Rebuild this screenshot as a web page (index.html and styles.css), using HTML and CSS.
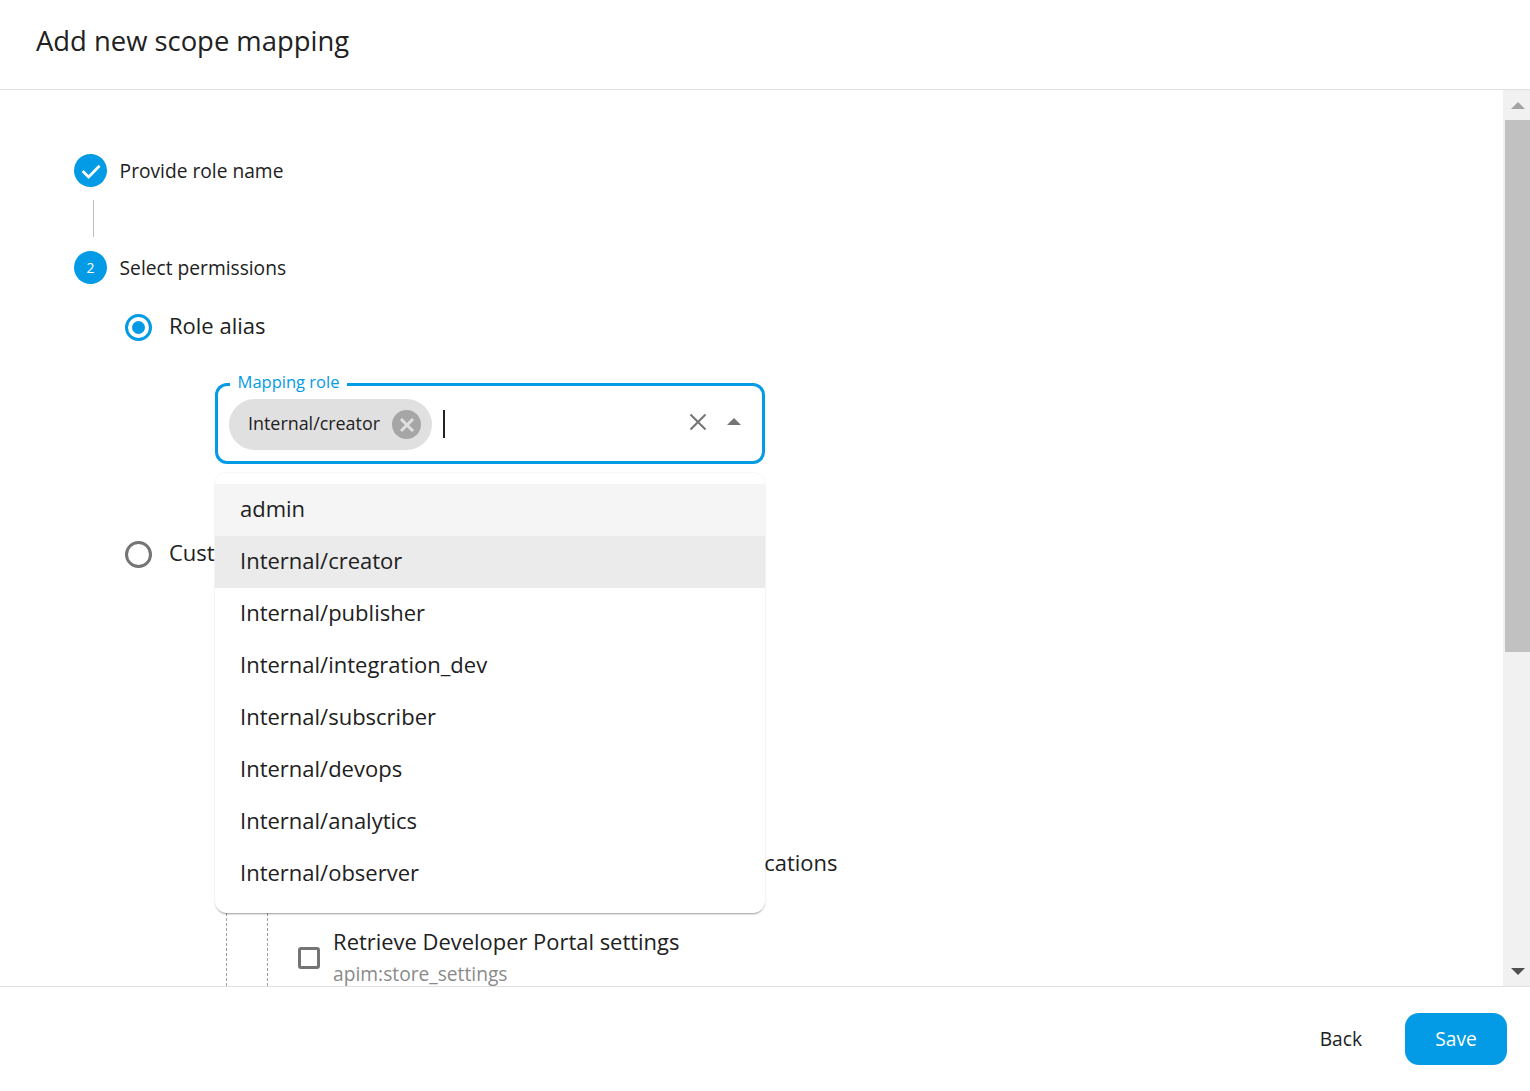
FILE: index.html
```html
<!DOCTYPE html>
<html lang="en">
<head>
<meta charset="utf-8">
<title>Add new scope mapping</title>
<link rel="stylesheet" href="styles.css">
</head>
<body>
<div class="dialog">
  <header class="dialog-header"><h2 class="dialog-title">Add new scope mapping</h2></header>
  <div class="dialog-main">
    <main class="content">
      <div class="step">
        <span class="step-icon">
          <svg width="20" height="20" viewBox="0 0 20 20"><path d="M1.6 10l6 6L18.6 4.8" fill="none" stroke="#fff" stroke-width="2.7"/></svg>
        </span>
        <span class="step-label">Provide role name</span>
      </div>
      <div class="connector"></div>
      <div class="step">
        <span class="step-icon">2</span>
        <span class="step-label">Select permissions</span>
      </div>
      <div class="option first">
        <span class="radio checked"><span class="radio-dot"></span></span>
        <span class="option-label">Role alias</span>
      </div>
      <div class="field">
        <span class="field-label">Mapping role</span>
        <span class="chip">
          <span class="chip-text">Internal/creator</span>
          <span class="chip-del">
            <svg width="16" height="16" viewBox="0 0 16 16"><path d="M2 2l12 12M14 2L2 14" stroke="#e0e0e0" stroke-width="3"/></svg>
          </span>
        </span>
        <span class="caret"></span>
        <svg class="clear-icon" width="18" height="18" viewBox="0 0 18 18"><path d="M1.5 1.5l15 15M16.5 1.5l-15 15" stroke="#757575" stroke-width="2.1"/></svg>
        <span class="arrow-up"></span>
      </div>
      <div class="option second">
        <span class="radio"></span>
        <span class="option-label">Custom scope assignments</span>
      </div>
      <div class="tree">
        <div class="tree-inner">
          <div class="perm">
            <span class="checkbox"></span>
            <div class="perm-text">
              <div class="perm-title">Retrieve, Manage and Import, Export applications</div>
              <div class="perm-sub">apim:app_manage</div>
            </div>
          </div>
          <div class="perm">
            <span class="checkbox"></span>
            <div class="perm-text">
              <div class="perm-title">Retrieve Developer Portal settings</div>
              <div class="perm-sub">apim:store_settings</div>
            </div>
          </div>
        </div>
      </div>
      <ul class="menu">
        <li class="menu-item hover">admin</li>
        <li class="menu-item selected">Internal/creator</li>
        <li class="menu-item">Internal/publisher</li>
        <li class="menu-item">Internal/integration_dev</li>
        <li class="menu-item">Internal/subscriber</li>
        <li class="menu-item">Internal/devops</li>
        <li class="menu-item">Internal/analytics</li>
        <li class="menu-item">Internal/observer</li>
      </ul>
    </main>
    <aside class="scrollbar">
      <span class="sb-btn"><span class="sb-up"></span></span>
      <span class="sb-thumb"></span>
      <span class="sb-track"></span>
      <span class="sb-btn"><span class="sb-down"></span></span>
    </aside>
  </div>
  <footer class="dialog-footer">
    <button class="btn">Back</button>
    <button class="btn primary">Save</button>
  </footer>
</div>
</body>
</html>
```
FILE: styles.css
```css
* { box-sizing: border-box; }
html, body { margin: 0; padding: 0; height: 100%; }
body { font-family: "Open Sans", "Noto Sans", sans-serif; color: #212121; background: #fff; overflow: hidden; }
.dialog { display: flex; flex-direction: column; height: 1091px; }
.dialog-header { height: 90px; border-bottom: 1px solid #e0e0e0; padding: 0 36px 8px; display: flex; align-items: center; flex: none; }
.dialog-title { margin: 0; font-size: 27.4px; font-weight: 400; line-height: 40px; }
.dialog-main { flex: 1; display: flex; min-height: 0; }
.content { flex: 1; position: relative; overflow: hidden; padding: 64px 0 0 74px; }
.step { display: flex; align-items: center; height: 33px; gap: 12.6px; }
.step-icon { width: 33px; height: 33px; border-radius: 50%; background: #039be5; color: #fff; font-size: 14px; display: flex; align-items: center; justify-content: center; flex: none; }
.step-label { font-size: 19.2px; line-height: 33px; }
.connector { width: 1px; height: 37px; background: #bdbdbd; margin: 13px 0 14px 19px; }
.option { display: flex; align-items: center; gap: 17px; height: 27px; margin-left: 51px; }
.option.first { margin-top: 30px; }
.option.second { margin-top: 77px; }
.option-label { font-size: 22px; line-height: 27px; white-space: nowrap; padding-bottom: 4px; }
.radio { width: 27px; height: 27px; border: 3px solid #757575; border-radius: 50%; display: flex; align-items: center; justify-content: center; flex: none; }
.radio.checked { border-color: #039be5; }
.radio-dot { width: 13px; height: 13px; background: #039be5; border-radius: 50%; }
.field { position: relative; display: flex; align-items: center; width: 550px; height: 81px; margin: 42px 0 0 141px; padding-left: 11px; border: 3px solid #039be5; border-radius: 12px; }
.field-label { position: absolute; left: 12px; top: -15px; padding: 0 8px 0 7.6px; background: #fff; color: #039be5; font-size: 16.5px; line-height: 22px; }
.chip { display: flex; align-items: center; width: 203px; height: 51px; margin-top: 2px; border-radius: 26px; background: #e0e0e0; padding: 0 11px 0 19px; justify-content: space-between; }
.chip-text { font-size: 17.9px; padding-bottom: 4px; }
.chip-del { width: 29px; height: 29px; border-radius: 50%; background: #a6a6a6; display: flex; align-items: center; justify-content: center; }
.caret { width: 2px; height: 28px; background: #212121; margin-left: 11px; }
.clear-icon { position: absolute; left: 471px; top: 27px; }
.arrow-up { position: absolute; left: 509px; top: 32px; border: 7px solid transparent; border-top: 0; border-bottom-color: #757575; }
.tree { margin: 270px 0 0 152px; border-left: 1px dashed #9e9e9e; padding-left: 40px; }
.tree-inner { border-left: 1px dashed #9e9e9e; padding-left: 30px; }
.perm { display: flex; align-items: center; gap: 13.5px; height: 79px; }
.perm-text { margin-top: 2px; }
.checkbox { width: 22px; height: 22px; margin-top: 2px; margin-left: -0.4px; border: 3px solid #757575; border-radius: 3px; flex: none; }
.perm-title { font-size: 21.93px; line-height: 32px; white-space: nowrap; }
.perm-sub { font-size: 19.2px; line-height: 32px; color: #8a8a8a; white-space: nowrap; }
.menu { position: absolute; left: 215px; top: 383px; width: 550px; height: 440px; margin: 0; padding: 11px 0; list-style: none; background: #fff; border-radius: 12px; box-shadow: 0 2px 2px -1px rgba(0,0,0,.38), 0 0 3px rgba(0,0,0,.07); }
.menu-item { height: 52px; line-height: 48px; padding-left: 25px; font-size: 22px; }
.menu-item.hover { background: #f5f5f5; }
.menu-item.selected { background: #ebebeb; }
.scrollbar { width: 27px; flex: none; background: #f1f1f1; display: flex; flex-direction: column; }
.sb-btn { height: 30px; flex: none; display: flex; align-items: center; justify-content: center; padding-left: 2px; }
.sb-up { border: 7px solid transparent; border-top: 0; border-bottom: 7px solid #a3a3a3; }
.sb-down { border: 7px solid transparent; border-bottom: 0; border-top: 7px solid #505050; }
.sb-thumb { height: 532px; margin-left: 2px; background: #c1c1c1; flex: none; }
.sb-track { flex: 1; }
.dialog-footer { height: 105px; border-top: 1px solid #e0e0e0; flex: none; display: flex; align-items: center; justify-content: flex-end; padding: 0 23px 0 0; gap: 13px; }
.btn { font-family: inherit; font-size: 19.2px; color: #212121; background: none; border: 0; height: 52px; padding: 0 30px 2px; border-radius: 14px; }
.btn.primary { background: #039be5; color: #fff; width: 102px; padding: 0 0 2px; }
```
